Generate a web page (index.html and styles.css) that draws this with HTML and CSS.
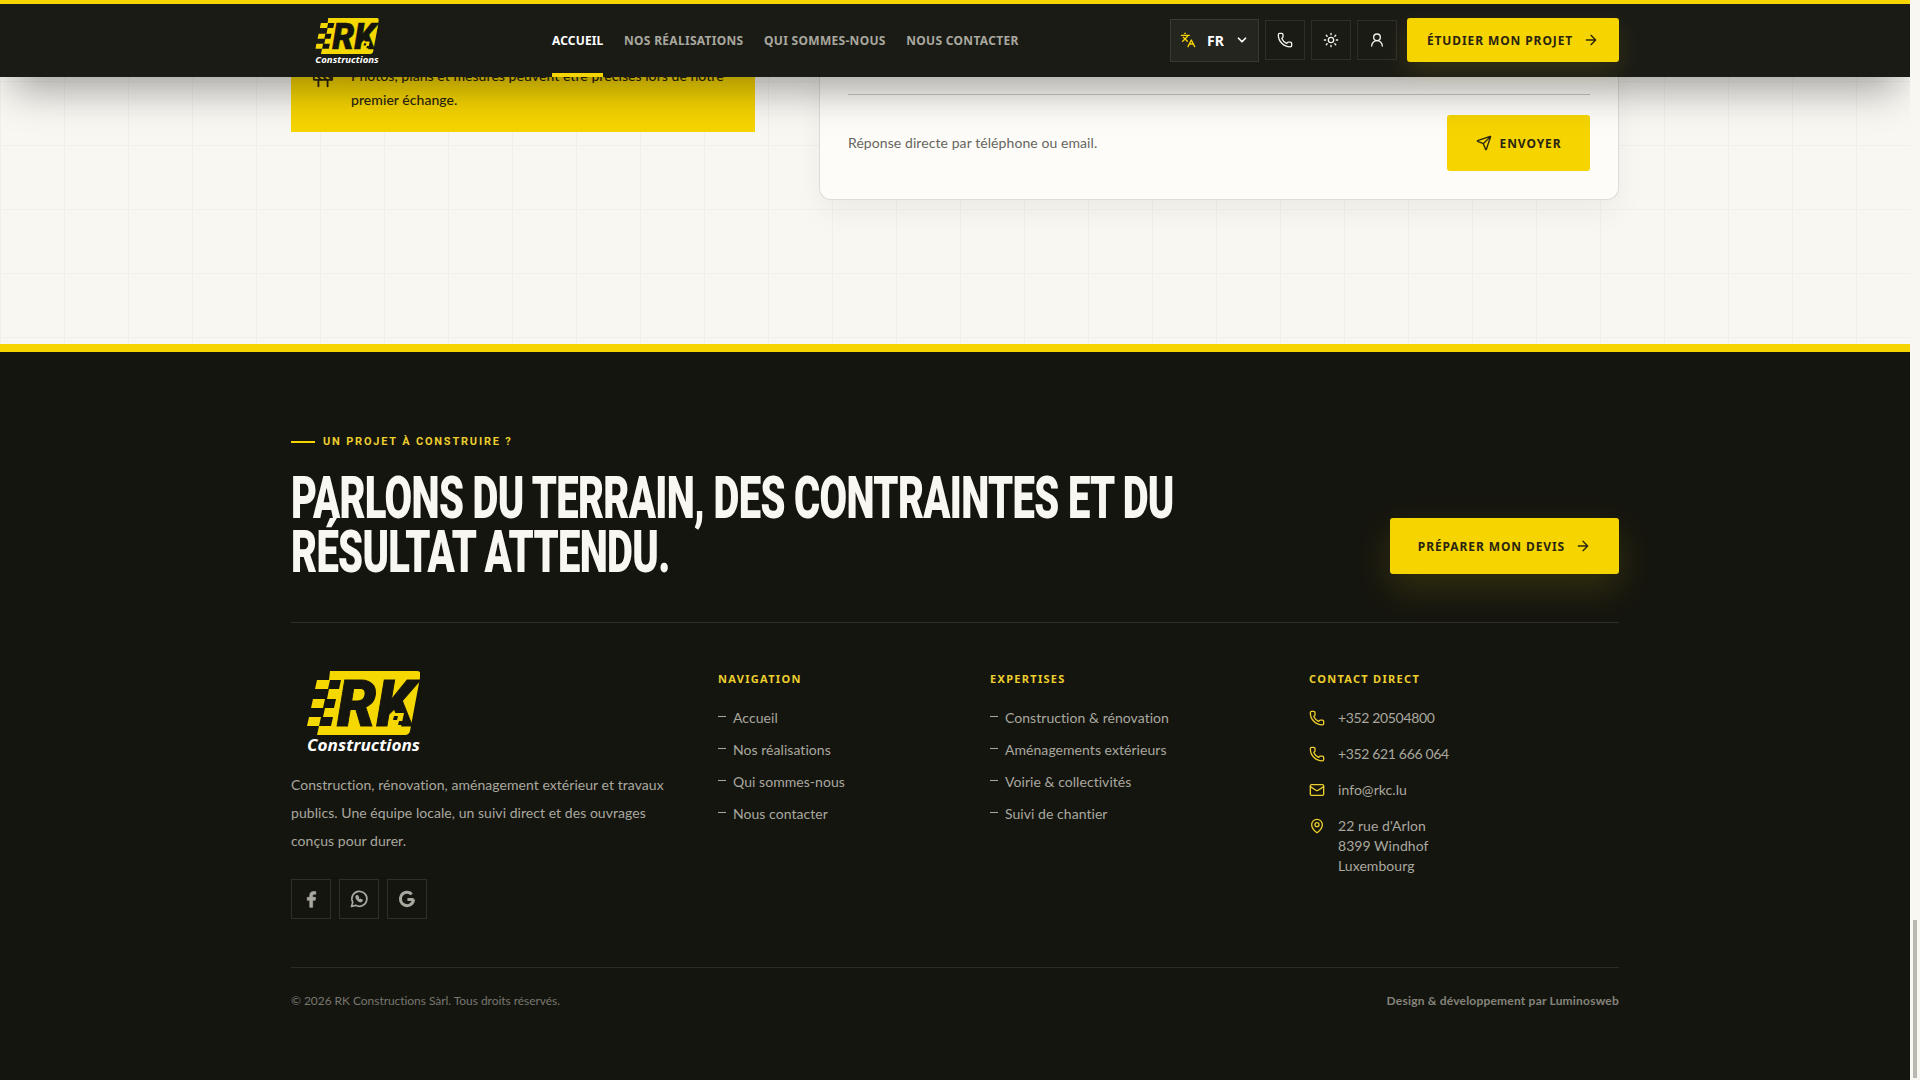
FILE: index.html
```html
<!DOCTYPE html>
<html lang="fr">
<head>
    <meta charset="UTF-8">
    <title>RK Constructions</title>
    <link rel="stylesheet" href="styles.css">
</head>
<body>
    <svg class="sprites" width="0" height="0">
        <symbol id="phone" viewBox="0 0 24 24"><path d="M13.800 16.800a1 1 0 0 0 1.200-.3l.4-.5a2 2 0 0 1 1.600-.8h3a2 2 0 0 1 2 2v3a2 2 0 0 1-2 2A18 18 0 0 1 2 4a2 2 0 0 1 2-2h3a2 2 0 0 1 2 2v3a2 2 0 0 1-.8 1.600l-.5.4a1 1 0 0 0-.3 1.200 14 14 0 0 0 6.400 6.600"/></symbol>
        <symbol id="arrow" viewBox="0 0 24 24"><path d="M5 12h14M12 5l7 7-7 7"/></symbol>
        <symbol id="logo-mark" viewBox="0 0 113 64">
            <path d="M23 0H110Q114 0 113.500 4L103 60Q102 64 98 64H10L12 55H0L2 46H16L18 37H4L6 28H20L22 18H8L10 9H22Z" fill="#f5d800"/>
            <path d="M23 9H34L32 18H21ZM18 28H29L27 37H16ZM14 46H26L24 55H12Z" fill="#15150f"/>
        </symbol>
    </svg>

    <div class="page">
        <header class="topbar">
            <div class="topbar-inner">
                <a class="topbar-logo" href="#">
                    <svg class="logo-small" viewBox="0 0 113 82">
                        <use href="#logo-mark" width="113" height="64"/>
                        <text class="logo-rk" x="30" y="55" textLength="78" lengthAdjust="spacingAndGlyphs">RK</text>
                        <path d="M85 42h12l-3 14H82z" fill="#f5d800"/>
                        <path d="M87 45h4l-1 4h-4zM92 50h4l-1 4h-4z" fill="#15150f"/>
                        <text class="logo-sub" x="0" y="80" textLength="113" lengthAdjust="spacingAndGlyphs">Constructions</text>
                    </svg>
                </a>
                <nav class="nav">
                    <a class="nav-link active" href="#">ACCUEIL</a>
                    <a class="nav-link" href="#">NOS RÉALISATIONS</a>
                    <a class="nav-link" href="#">QUI SOMMES-NOUS</a>
                    <a class="nav-link" href="#">NOUS CONTACTER</a>
                </nav>
                <div class="tools">
                    <div class="lang">
                        <svg class="icon lang-icon" viewBox="0 0 24 24"><path d="m5 8 6 6M4 14l6-6 2-3M2 5h12M7 2h1M22 22l-5-10-5 10M14 18h6"/></svg>
                        <span>FR</span>
                        <svg class="icon chevron" viewBox="0 0 24 24"><path d="m6 9 6 6 6-6"/></svg>
                    </div>
                    <a class="tool" href="#"><svg class="icon"><use href="#phone"/></svg></a>
                    <a class="tool" href="#"><svg class="icon" viewBox="0 0 24 24"><circle cx="12" cy="12" r="4"/><path d="M12 2v2M12 20v2M4.900 4.900l1.400 1.400M17.700 17.700l1.400 1.400M2 12h2M20 12h2M6.300 17.700l-1.400 1.400M19.100 4.900l-1.400 1.400"/></svg></a>
                    <a class="tool" href="#"><svg class="icon" viewBox="0 0 24 24"><circle cx="12" cy="8" r="5"/><path d="M20 21a8 8 0 0 0-16 0"/></svg></a>
                    <a class="btn btn-top" href="#">ÉTUDIER MON PROJET <svg class="icon"><use href="#arrow"/></svg></a>
                </div>
            </div>
        </header>

        <main class="contact">
            <div class="wrap contact-grid">
                <aside class="note">
                    <svg class="icon note-icon" viewBox="0 0 24 24"><rect x="2" y="6" width="20" height="8" rx="1"/><path d="M17 14v7M7 14v7M17 3v3M7 3v3M10 14 2.300 6.300M14 6l7.700 7.700M8 6l8 8"/></svg>
                    <p>Photos, plans et mesures peuvent être précises lors de notre premier échange.</p>
                </aside>
                <form class="card">
                    <div class="field-line"></div>
                    <div class="card-foot">
                        <span class="card-hint">Réponse directe par téléphone ou email.</span>
                        <button class="btn btn-send" type="button"><svg class="icon" viewBox="0 0 24 24"><path d="M14.500 21.700a.5.5 0 0 0 .9 0l6.500-19a.5.5 0 0 0-.6-.6l-19 6.500a.5.5 0 0 0 0 .9l7.900 3.200a2 2 0 0 1 1.100 1.100zM21.900 2.100 10.900 13.100"/></svg> ENVOYER</button>
                    </div>
                </form>
            </div>
        </main>

        <footer class="footer">
            <div class="wrap">
                <section class="cta">
                    <div class="cta-text">
                        <div class="eyebrow">UN PROJET À CONSTRUIRE ?</div>
                        <h2 class="cta-title"><span>PARLONS DU TERRAIN, DES CONTRAINTES ET DU<br>RÉSULTAT ATTENDU.</span></h2>
                    </div>
                    <a class="btn btn-cta" href="#">PRÉPARER MON DEVIS <svg class="icon"><use href="#arrow"/></svg></a>
                </section>

                <section class="columns">
                    <div>
                        <svg class="logo-big" viewBox="0 0 113 82">
                            <use href="#logo-mark" width="113" height="64"/>
                            <text class="logo-rk" x="30" y="55" textLength="78" lengthAdjust="spacingAndGlyphs">RK</text>
                            <path d="M85 42h12l-3 14H82z" fill="#f5d800"/>
                            <path d="M87 45h4l-1 4h-4zM92 50h4l-1 4h-4z" fill="#15150f"/>
                            <text class="logo-sub" x="0" y="80" textLength="113" lengthAdjust="spacingAndGlyphs">Constructions</text>
                        </svg>
                        <p class="about">Construction, rénovation, aménagement extérieur et travaux publics. Une équipe locale, un suivi direct et des ouvrages conçus pour durer.</p>
                        <div class="socials">
                            <a class="social" href="#"><svg viewBox="0 0 24 24" class="fill-icon"><path d="M14 22v-8.500h3l.5-3.500H14V8c0-1 .4-1.700 1.800-1.700h1.900V3.100C17.300 3 16.200 3 15 3c-2.700 0-4.500 1.600-4.500 4.600V10H7.500v3.500h3V22z"/></svg></a>
                            <a class="social" href="#"><svg viewBox="0 0 24 24" class="icon"><path d="M3 21l1.500-5A9 9 0 1 1 8 19.600z"/><path d="M9 8.500c-.8 1 0 3 1.500 4.500s3.500 2.300 4.500 1.500l.6-1-2-1-.8.700c-1-.4-1.700-1.200-2.200-2.200l.7-.8-1-2z"/></svg></a>
                            <a class="social" href="#"><svg viewBox="0 0 24 24" class="icon google"><path d="M20 12.500H12.500M20 12.500A8 8 0 1 1 17.700 6.300"/></svg></a>
                        </div>
                    </div>
                    <div>
                        <h3 class="col-title">NAVIGATION</h3>
                        <ul class="links">
                            <li>Accueil</li>
                            <li>Nos réalisations</li>
                            <li>Qui sommes-nous</li>
                            <li>Nous contacter</li>
                        </ul>
                    </div>
                    <div>
                        <h3 class="col-title">EXPERTISES</h3>
                        <ul class="links">
                            <li>Construction &amp; rénovation</li>
                            <li>Aménagements extérieurs</li>
                            <li>Voirie &amp; collectivités</li>
                            <li>Suivi de chantier</li>
                        </ul>
                    </div>
                    <div>
                        <h3 class="col-title">CONTACT DIRECT</h3>
                        <div class="contact-list">
                            <div class="contact-row"><svg class="icon"><use href="#phone"/></svg><span class="tel">+352 20504800</span></div>
                            <div class="contact-row"><svg class="icon"><use href="#phone"/></svg><span class="tel">+352 621 666 064</span></div>
                            <div class="contact-row"><svg class="icon" viewBox="0 0 24 24"><rect x="2" y="4" width="20" height="16" rx="2"/><path d="m22 7-8.900 5.700a2 2 0 0 1-2.100 0L2 7"/></svg><span>info@rkc.lu</span></div>
                            <div class="contact-row"><svg class="icon" viewBox="0 0 24 24"><path d="M20 10c0 5-5.500 10.200-7.400 11.800a1 1 0 0 1-1.200 0C9.500 20.200 4 15 4 10a8 8 0 0 1 16 0"/><circle cx="12" cy="10" r="3"/></svg><span>22 rue d'Arlon<br>8399 Windhof<br>Luxembourg</span></div>
                        </div>
                    </div>
                </section>

                <section class="legal">
                    <span>© 2026 RK Constructions Sàrl. Tous droits réservés.</span>
                    <span class="credit">Design &amp; développement par Luminosweb</span>
                </section>
            </div>
        </footer>
    </div>

    <div class="scrollbar"><div class="scrollbar-thumb"></div></div>
</body>
</html>
```

FILE: styles.css
```css
* {
    box-sizing: border-box;
}

html, body {
    height: 100%;
}

body {
    margin: 0;
    display: flex;
    overflow: hidden;
    background-color: #f8f7f2;
    color: #a9a89f;
    font-family: Lato, "Noto Sans", Arial, sans-serif;
    font-size: 14px;
    letter-spacing: 0.05px;
}

a {
    color: inherit;
    text-decoration: none;
}

.sprites {
    position: absolute;
}

.icon {
    width: 16px;
    height: 16px;
    fill: none;
    stroke: currentColor;
    stroke-width: 2;
    stroke-linecap: round;
    stroke-linejoin: round;
    flex-shrink: 0;
}

.page {
    position: relative;
    width: 1910px;
    height: 1080px;
    overflow: hidden;
    display: flex;
    flex-direction: column;
}

.wrap {
    width: 1328px;
    margin: 0 auto;
}

/* top bar */
.topbar {
    position: absolute;
    top: 0;
    left: 0;
    width: 100%;
    height: 77px;
    z-index: 5;
    background-color: #1b1b16;
    border-top: 4px solid #f5d400;
    box-shadow: 0 24px 40px -12px rgba(0, 0, 0, 0.36);
}

.topbar-inner {
    width: 1328px;
    height: 73px;
    margin: 0 auto;
    display: flex;
    align-items: center;
}

.topbar-logo {
    display: block;
    margin-left: 24px;
    height: 46px;
}

.logo-small {
    display: block;
    width: 64px;
    height: 46px;
}

.nav {
    display: flex;
    gap: 20.500px;
    margin-left: 173px;
    height: 73px;
}

.nav-link {
    position: relative;
    display: flex;
    align-items: center;
    padding-bottom: 1px;
    font-family: "Noto Sans", Arial, sans-serif;
    font-size: 12px;
    font-weight: 700;
    letter-spacing: 0.3px;
    color: #a9a89f;
}

.nav-link.active {
    color: #fff;
    letter-spacing: 0.15px;
}

.nav-link.active::after {
    content: "";
    position: absolute;
    left: 0;
    right: 0;
    bottom: 0;
    height: 4px;
    background-color: #f5d400;
}

.tools {
    display: flex;
    align-items: center;
    gap: 6px;
    margin-left: auto;
    margin-bottom: 1px;
}

.lang {
    display: flex;
    align-items: center;
    width: 89px;
    height: 43px;
    padding-left: 9px;
    color: #fff;
    background-color: #25251f;
    border: 1px solid #3a3a33;
    font-family: "Noto Sans", Arial, sans-serif;
    font-size: 14px;
    font-weight: 700;
}

.lang-icon {
    color: #f5d400;
    margin-right: 11px;
}

.chevron {
    margin-left: 11px;
    width: 14px;
    height: 14px;
    stroke-width: 3;
}

.tool {
    display: flex;
    align-items: center;
    justify-content: center;
    width: 40px;
    height: 40px;
    color: #f4f3ee;
    border: 1px solid #2f2f28;
}

.btn {
    display: flex;
    align-items: center;
    justify-content: center;
    flex-shrink: 0;
    border: none;
    border-radius: 3px;
    background-color: #f5d400;
    color: #2a2410;
    font-family: "Noto Sans", Arial, sans-serif;
    font-size: 12px;
    font-weight: 700;
    letter-spacing: 0.9px;
}

.btn-top {
    width: 212px;
    height: 44px;
    margin-left: 4px;
    gap: 10px;
    box-shadow: 0 10px 24px rgba(245, 212, 0, 0.12);
}

/* contact section, cut off by the scroll position */
.contact {
    height: 344px;
    flex-shrink: 0;
    overflow: hidden;
    display: flex;
    flex-direction: column;
    justify-content: flex-end;
    padding-bottom: 144px;
    background-color: #f8f7f2;
    background-image:
        linear-gradient(to right, #f1f0ea 1px, transparent 1px),
        linear-gradient(to bottom, #f1f0ea 1px, transparent 1px);
    background-size: 64px 64px;
    background-position: 0 17px;
}

.contact-grid {
    display: grid;
    grid-template-columns: 464px 800px;
    gap: 64px;
    flex-shrink: 0;
}

.note {
    align-self: end;
    display: flex;
    gap: 17px;
    margin-bottom: 68px;
    padding: 0 16px 20px 21px;
    background-color: #f5d400;
    color: #2a2410;
    font-weight: 500;
    line-height: 24px;
}

.note p {
    margin: 0;
}

.note-icon {
    width: 22px;
    height: 22px;
    margin-top: 3px;
}

.card {
    height: 140px;
    padding: 0 28px;
    display: flex;
    flex-direction: column;
    justify-content: flex-end;
    background-color: #fdfcf8;
    border: 1px solid #dddcd6;
    border-top: none;
    border-radius: 0 0 12px 12px;
    box-shadow: 0 12px 30px rgba(0, 0, 0, 0.05);
}

.field-line {
    height: 1px;
    margin-bottom: 20px;
    background-color: #c9c8c2;
}

.card-foot {
    display: flex;
    align-items: center;
    justify-content: space-between;
    margin-bottom: 28px;
    color: #66655e;
}

.card-hint {
    margin-bottom: 2px;
    letter-spacing: 0.08px;
}

.btn-send {
    width: 143px;
    height: 56px;
    gap: 8px;
}

/* footer */
.footer {
    flex-grow: 1;
    background-color: #15150f;
    border-top: 8px solid #f5d400;
}

.cta {
    height: 271px;
    display: flex;
    align-items: flex-end;
    justify-content: space-between;
    padding-bottom: 48px;
    border-bottom: 1px solid #2c2c26;
}

.cta-text {
    width: 900px;
    margin-bottom: -5px;
}

.eyebrow {
    display: flex;
    align-items: center;
    gap: 8px;
    font-family: Roboto, Arial, sans-serif;
    font-size: 11px;
    font-weight: 700;
    letter-spacing: 1.8px;
    color: #ecce2e;
    margin-bottom: 23px;
}

.eyebrow::before {
    content: "";
    width: 24px;
    height: 2px;
    background-color: #f5d400;
}

.cta-title {
    margin: 0;
    font-family: Roboto, Arial, sans-serif;
    font-size: 60px;
    font-weight: 900;
    line-height: 54px;
    letter-spacing: -1px;
    color: #f8f7f2;
    white-space: nowrap;
}

.cta-title span {
    display: block;
    transform: scaleX(0.666);
    transform-origin: left center;
}

.btn-cta {
    width: 229px;
    height: 56px;
    gap: 10px;
    box-shadow: 0 14px 36px rgba(245, 212, 0, 0.14);
}

.columns {
    display: grid;
    grid-template-columns: 379px 224px 271px 1fr;
    gap: 48px;
    height: 345px;
    padding-top: 48px;
    border-bottom: 1px solid #2c2c26;
}

.logo-big {
    display: block;
    width: 113px;
    height: 82px;
    margin-left: 16px;
}

.logo-rk {
    font-family: Roboto, Arial, sans-serif;
    font-size: 65px;
    font-weight: 900;
    font-style: italic;
    fill: #15150f;
    stroke: #15150f;
    stroke-width: 1;
}

.logo-sub {
    font-family: "Open Sans", Arial, sans-serif;
    font-size: 16px;
    font-weight: 700;
    font-style: italic;
    fill: #fff;
}

.about {
    margin: 18px 0 0;
    line-height: 28px;
}

.socials {
    display: flex;
    gap: 8px;
    margin-top: 24px;
}

.social {
    display: flex;
    align-items: center;
    justify-content: center;
    width: 40px;
    height: 40px;
    border: 1px solid #2f2f28;
    color: #a9a89f;
}

.social svg {
    width: 20px;
    height: 20px;
}

.fill-icon {
    fill: currentColor;
    stroke: currentColor;
    stroke-width: 0.8;
}

.google {
    stroke-width: 3.6;
    stroke-linecap: butt;
}

.col-title {
    margin: 0 0 21px;
    font-family: "Noto Sans", Arial, sans-serif;
    font-size: 11px;
    font-weight: 700;
    line-height: 16px;
    letter-spacing: 1.3px;
    color: #ecce2e;
}

.links {
    list-style: none;
    margin: 0;
    padding: 0;
    display: flex;
    flex-direction: column;
    gap: 12px;
}

.links li {
    display: flex;
    align-items: center;
    gap: 7px;
    line-height: 20px;
}

.links li::before {
    content: "";
    width: 8px;
    height: 1px;
    margin-bottom: 3px;
    background-color: #a9a89f;
}

.contact-list {
    display: flex;
    flex-direction: column;
    gap: 16px;
}

.contact-row {
    display: flex;
    gap: 13px;
    line-height: 20px;
}

.contact-row .icon {
    color: #ecce2e;
    margin-top: 2px;
}

.tel {
    letter-spacing: -0.35px;
}

.legal {
    display: flex;
    justify-content: space-between;
    padding-top: 25px;
    font-size: 12px;
    letter-spacing: -0.05px;
    color: #77776f;
}

.credit {
    font-weight: 700;
    letter-spacing: 0.2px;
    color: #84847b;
}

/* fake browser scrollbar */
.scrollbar {
    flex-grow: 1;
    position: relative;
    background-color: #f8f7f2;
}

.scrollbar-thumb {
    position: absolute;
    top: 920px;
    bottom: 2px;
    left: 3px;
    width: 4px;
    background-color: #b9b9b0;
}
```
